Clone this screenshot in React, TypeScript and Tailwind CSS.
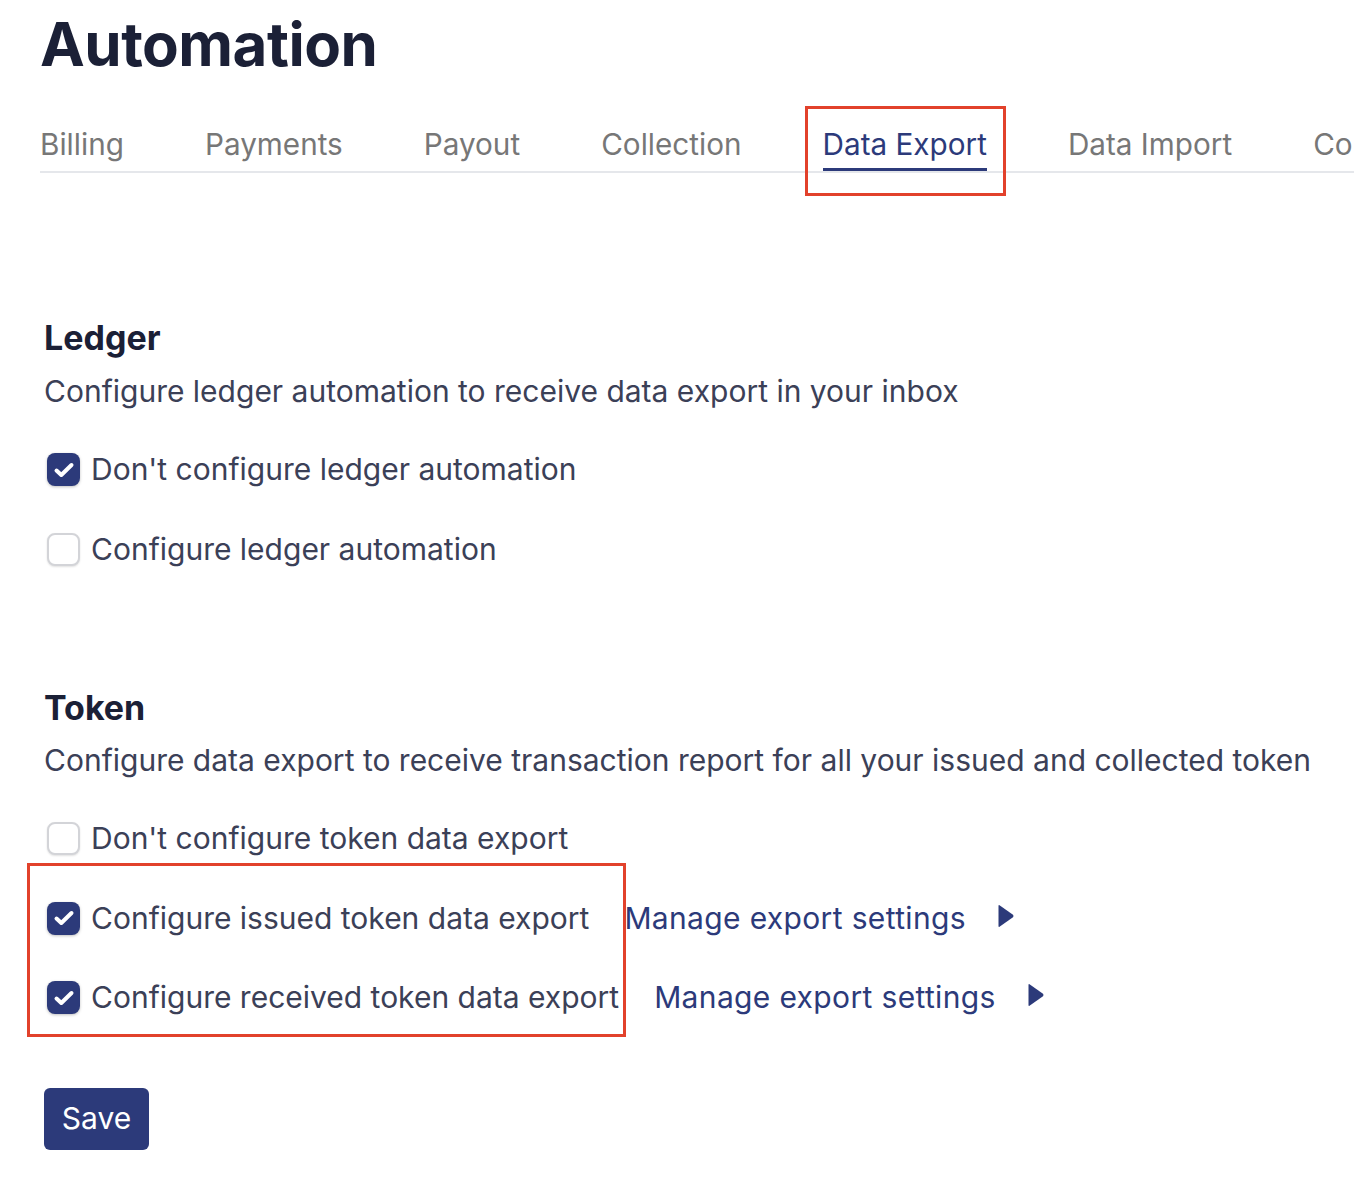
import React from 'react';

const tabs = ['Billing', 'Payments', 'Payout', 'Collection', 'Data Export', 'Data Import', 'Contracts'];

function Checkbox({ checked }: { checked: boolean }) {
  if (checked) {
    return (
      <span className="flex h-[33px] w-[33px] shrink-0 items-center justify-center rounded-[8px] bg-[#2c3a7a] shadow-[0_1px_3px_rgba(0,0,0,0.25)]">
        <svg width="24" height="24" viewBox="0 0 24 24" fill="none">
          <path d="M4.5 12.5l4.8 4.5L19.5 7" stroke="white" strokeWidth="4" strokeLinecap="round" strokeLinejoin="round" />
        </svg>
      </span>
    );
  }
  return (
    <span className="block h-[33px] w-[33px] shrink-0 rounded-[8px] border-2 border-[#d3d4d8] bg-white shadow-[0_1px_2px_rgba(0,0,0,0.12)]" />
  );
}

function Row({ checked, label, link }: { checked: boolean; label: string; link?: boolean }) {
  return (
    <div className="flex h-[79.5px] items-center">
      <div className="ml-[3px]">
        <Checkbox checked={checked} />
      </div>
      <span className="ml-[11px] text-[30px] text-[#3b4057]">{label}</span>
      {link && (
        <span className="ml-[35px] flex items-center text-[30px] tracking-[0.35px] text-[#2c3a7a]">
          Manage export settings
          <svg className="ml-[32px] -mt-[5px]" width="16" height="24" viewBox="0 0 16 24">
            <path d="M1.5 1.2 L15 10.8 Q16 12 15 13.2 L1.5 22.8 Q0.5 23.4 0.5 22 L0.5 2 Q0.5 0.6 1.5 1.2Z" fill="#2c3a7a" />
          </svg>
        </span>
      )}
    </div>
  );
}

export default function App() {
  return (
    <main className="relative min-h-[1180px] w-[1354px] overflow-hidden bg-white font-['Inter',sans-serif]">
      <div className="pl-[40px]">
        <h1 className="pt-[14px] text-[60px] font-bold leading-none tracking-[-0.5px] text-[#1b2036]">Automation</h1>

        <nav className="mt-[52px] flex gap-[81px] whitespace-nowrap border-b-2 border-[#e5e7eb]">
          {tabs.map((t) => {
            const active = t === 'Data Export';
            return (
              <div key={t} className="relative">
                <div
                  className={
                    active
                      ? 'border-b-[3px] border-[#2c3a7a] pb-[6px] text-[29.7px] leading-[36px] text-[#2c3a7a]'
                      : 'border-b-[3px] border-transparent pb-[6px] text-[29.7px] leading-[36px] text-[#777777]'
                  }
                >
                  {t}
                </div>
                {active && (
                  <div className="absolute -left-[18px] -right-[19px] -top-[20px] -bottom-[25px] border-[3px] border-[#e2412b]" />
                )}
              </div>
            );
          })}
        </nav>
      </div>

      <div className="relative pl-[44px]">
        <section className="mt-[145px]">
          <h2 className="text-[34px] font-bold leading-[40px] text-[#1b2036]">Ledger</h2>
          <p className="mt-[13px] text-[30px] leading-[40px] text-[#3b4057]">
            Configure ledger automation to receive data export in your inbox
          </p>
          <div className="mt-[19px]">
            <Row checked label="Don't configure ledger automation" />
            <Row checked={false} label="Configure ledger automation" />
          </div>
        </section>

        <section className="relative mt-[99px]">
          <h2 className="text-[34px] font-bold leading-[40px] text-[#1b2036]">Token</h2>
          <p className="mt-[12px] text-[30px] leading-[40px] text-[#3b4057]">
            Configure data export to receive transaction report for all your issued and collected token
          </p>
          <div className="relative mt-[19px]">
            <Row checked={false} label="Don't configure token data export" />
            <Row checked label="Configure issued token data export" link />
            <Row checked label="Configure received token data export" link />
            <div className="absolute -left-[17px] top-[64px] h-[174px] w-[599px] border-[3px] border-[#e2412b]" />
          </div>
        </section>

        <button className="mt-[50px] h-[62px] w-[105px] rounded-[6px] bg-[#2c3a7a] text-[30px] text-white">Save</button>
      </div>
    </main>
  );
}
